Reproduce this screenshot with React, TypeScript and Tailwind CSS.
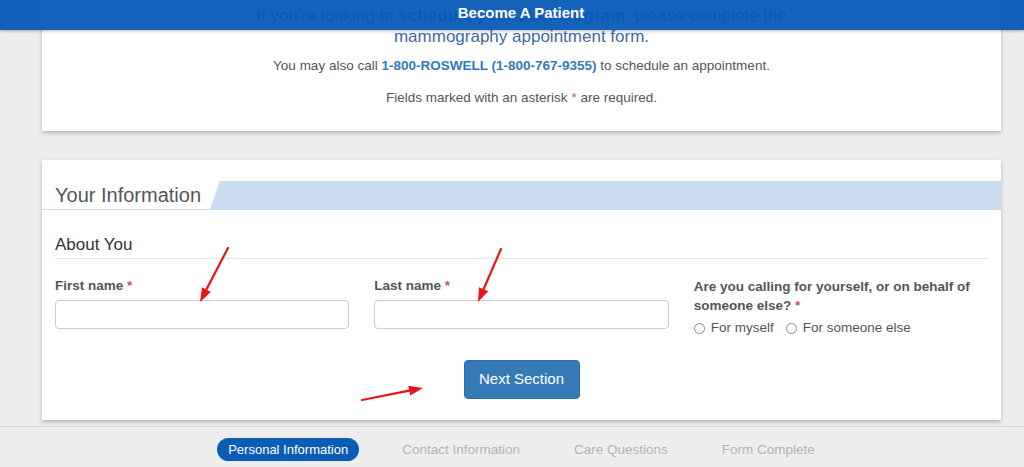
import React from "react";

export default function App() {
  return (
    <div
      className="relative w-[1024px] h-[467px] overflow-hidden bg-[#eeeeee]"
      style={{ fontFamily: '"Liberation Sans", Arial, sans-serif' }}
    >
      {/* Top card */}
      <div className="ml-[42px] w-[959px] bg-white shadow-[0_2px_4px_rgba(0,0,0,0.25)] pt-[5px] pb-[23px] text-center">
        <p className="text-[17px] leading-[21px] text-[#3d6ba3]">
          If you're looking to <b>schedule your mammogram</b>, please complete the
          <br />
          mammography appointment form.
        </p>
        <p className="mt-[9px] text-[13.5px] leading-[20px] text-[#555555]">
          You may also call{" "}
          <b className="text-[#337ab7]">1-800-ROSWELL (1-800-767-9355)</b> to schedule an
          appointment.
        </p>
        <p className="mt-[12px] text-[13.5px] leading-[20px] text-[#555555]">
          Fields marked with an asterisk <span className="text-[#c0508a]">*</span> are
          required.
        </p>
      </div>

      {/* Header bar overlay */}
      <div className="absolute left-0 top-0 w-full h-[30px] bg-[rgba(6,88,182,0.94)] shadow-[0_1px_3px_rgba(0,0,0,0.3)] flex justify-center">
        <span className="ml-[18px] pt-[4px] text-white text-[15px] leading-[18px] font-bold">
          Become A Patient
        </span>
      </div>

      {/* Second card */}
      <div className="mt-[29px] ml-[42px] w-[959px] bg-white shadow-[0_2px_4px_rgba(0,0,0,0.25)] pt-[21px] pb-[21px]">
        <div className="flex h-[29px] border-b border-[#c9dcf0]">
          <h2 className="pl-[13px] pr-[9px] text-[20px] leading-[28px] text-[#555555]">
            Your Information
          </h2>
          <div className="flex-1 bg-[#c9dcf0] [clip-path:polygon(10px_0,100%_0,100%_100%,0_100%)]" />
        </div>

        <div className="px-[13px]">
          <h3 className="mt-[25px] pb-[3px] border-b border-[#e5e5e5] text-[17px] leading-[20px] text-[#333333]">
            About You
          </h3>

          <div className="mt-[17px] grid grid-cols-3 gap-x-[25px]">
            <div>
              <label className="block text-[13.5px] leading-[20px] font-bold text-[#555555]">
                First name <span className="text-[#c0508a]">*</span>
              </label>
              <input className="mt-[4px] block w-full h-[29px] border border-[#cccccc] rounded-[4px] bg-white" />
            </div>
            <div>
              <label className="block text-[13.5px] leading-[20px] font-bold text-[#555555]">
                Last name <span className="text-[#c0508a]">*</span>
              </label>
              <input className="mt-[4px] block w-full h-[29px] border border-[#cccccc] rounded-[4px] bg-white" />
            </div>
            <div className="pt-[1px]">
              <label className="block text-[13.5px] leading-[19px] font-bold text-[#555555]">
                Are you calling for yourself, or on behalf of
                <br />
                someone else? <span className="text-[#c0508a]">*</span>
              </label>
              <div className="mt-[3px] flex items-center text-[13.5px] leading-[20px] text-[#555555]">
                <span className="w-[11px] h-[11px] rounded-full border border-[#8a8a8a] bg-white" />
                <span className="ml-[6px]">For myself</span>
                <span className="ml-[12px] w-[11px] h-[11px] rounded-full border border-[#8a8a8a] bg-white" />
                <span className="ml-[6px]">For someone else</span>
              </div>
            </div>
          </div>

          <div className="mt-[22px] flex justify-center">
            <button className="w-[116px] h-[39px] rounded-[4px] bg-[#337ab7] border border-[#2e6da4] text-white text-[15px]">
              Next Section
            </button>
          </div>
        </div>
      </div>

      {/* Footer steps */}
      <div className="mt-[6px] border-t border-[#dadada] pt-[11px]">
        <div className="ml-[42px] w-[959px] flex justify-center gap-[32px] text-[13.5px]">
          <span className="h-[23px] leading-[23px] px-[11px] rounded-full bg-[#0b5cb5] text-white text-[13px]">
            Personal Information
          </span>
          <span className="h-[23px] leading-[23px] px-[11px] text-[#b3b3b3]">
            Contact Information
          </span>
          <span className="h-[23px] leading-[23px] px-[11px] text-[#b3b3b3]">
            Care Questions
          </span>
          <span className="h-[23px] leading-[23px] px-[11px] text-[#b3b3b3]">
            Form Complete
          </span>
        </div>
      </div>

      {/* Red annotation arrows */}
      <svg className="absolute left-0 top-0 pointer-events-none" width="1024" height="467">
        <g stroke="#e8141a" strokeWidth="2.2" strokeLinecap="round">
          <line x1="228" y1="248" x2="206.4" y2="289.6" />
          <line x1="501" y1="249" x2="483.6" y2="289.2" />
          <line x1="362" y1="400" x2="409.3" y2="390.7" />
        </g>
        <g fill="#e8141a">
          <polygon points="200,302 210.8,291.9 202,287.3" />
          <polygon points="478,302 488.2,291.2 479,287.2" />
          <polygon points="423,388 410.3,395.6 408.3,385.8" />
        </g>
      </svg>
    </div>
  );
}
